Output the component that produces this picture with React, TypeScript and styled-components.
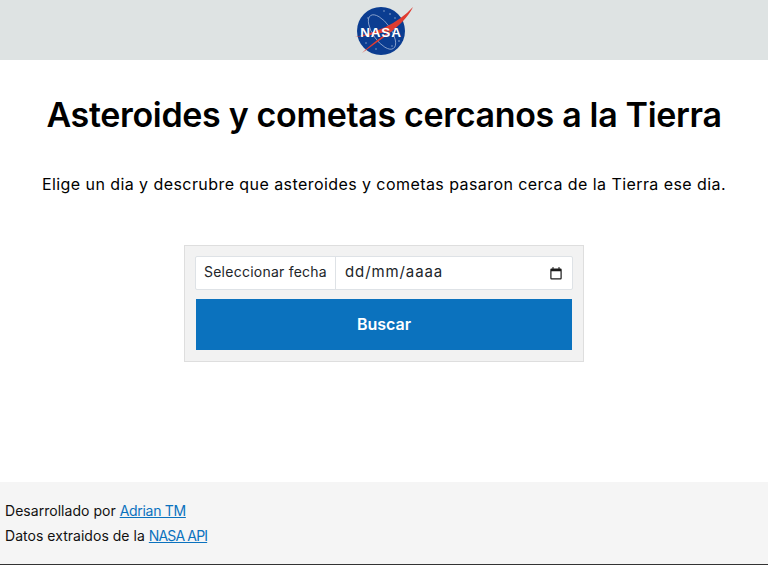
import React from "react";
import styled, { createGlobalStyle } from "styled-components";

const Global = createGlobalStyle`
  html, body { margin: 0; padding: 0; background: #fff; }
  body { font-family: "Inter", "Liberation Sans", sans-serif; color: #000; height: 565px; overflow: hidden; }
  #root { height: 565px; }
`;

const Page = styled.div`
  display: flex;
  flex-direction: column;
  height: 565px;
`;

const Header = styled.header`
  height: 60px;
  background: #dee3e3;
  display: flex;
  justify-content: center;
  align-items: center;
`;

const Main = styled.main`
  flex: 1;
  display: flex;
  flex-direction: column;
  align-items: center;
`;

const Title = styled.h1`
  margin: 33px 0 0;
  font-size: 34px;
  line-height: 44px;
  font-weight: 560;
  letter-spacing: -0.33px;
  white-space: nowrap;
`;

const Lead = styled.p`
  margin: 35px 0 0;
  font-size: 16px;
  line-height: 24px;
  letter-spacing: 0.43px;
  white-space: nowrap;
`;

const Card = styled.form`
  margin-top: 49px;
  width: 400px;
  height: 117px;
  box-sizing: border-box;
  background: #f2f2f2;
  border: 1px solid #dedede;
  padding: 10px;
  display: flex;
  flex-direction: column;
  gap: 9px;
`;

const InputGroup = styled.div`
  display: flex;
  height: 34px;
  box-sizing: border-box;
  background: #fff;
  border: 1px solid #dee2e6;
  border-radius: 2px;
`;

const Label = styled.span`
  width: 140px;
  flex: none;
  box-sizing: border-box;
  border-right: 1px solid #dee2e6;
  padding-bottom: 3px;
  display: flex;
  align-items: center;
  justify-content: center;
  font-size: 14px;
  letter-spacing: 0.24px;
  color: #212529;
`;

const DateField = styled.div`
  flex: 1;
  display: flex;
  align-items: center;
  justify-content: space-between;
  padding: 0 10px 3px 9px;
  font-size: 15px;
  color: #212529;
  letter-spacing: 0.9px;
`;

const DateIcon = styled.span`
  display: flex;
  padding-top: 3px;
`;

const SubmitButton = styled.button`
  height: 51px;
  margin: 0 1px;
  padding: 0 0 2px;
  border: 0;
  background: #0b72be;
  color: #fff;
  font-family: inherit;
  font-size: 16px;
  font-weight: 600;
`;

const Footer = styled.footer`
  height: 83px;
  box-sizing: border-box;
  background: #f5f5f5;
  border-bottom: 1px solid #333;
  padding: 16px 5px 0;
  font-size: 14px;
  line-height: 25px;
  letter-spacing: 0.03px;
  color: #111;
`;

const FooterLine = styled.div``;

const FooterLink = styled.a<{ $tracking: number }>`
  color: #0b72be;
  text-decoration: underline;
  letter-spacing: ${(p) => p.$tracking}px;
`;

const NasaLogo = () => (
  <svg width="60" height="56" viewBox="0 0 60 56" aria-hidden="true">
    <circle cx="27" cy="29" r="24" fill="#0b3d91" />
    <ellipse cx="28" cy="30" rx="9" ry="20" transform="rotate(-35 28 30)" fill="none" stroke="#a9bcdc" strokeWidth="0.7" />
    <g fill="#9fb4d8">
      <circle cx="36" cy="12" r="0.8" /><circle cx="41" cy="16" r="0.7" /><circle cx="45" cy="39" r="0.8" />
      <circle cx="38" cy="44" r="0.7" /><circle cx="14" cy="16" r="0.7" /><circle cx="12" cy="41" r="0.7" />
      <circle cx="30" cy="9" r="0.7" /><circle cx="22" cy="47" r="0.7" />
    </g>
    <path d="M1 35 C 20 31, 44 22, 59 5 C 52 20, 34 33, 8 51 C 18 41, 28 35, 36 29 C 24 32, 12 34, 1 35 Z" fill="#e03c31" />
    <text x="27" y="34.5" textAnchor="middle" fontFamily="Liberation Sans, sans-serif" fontWeight="700" fontSize="13.5" letterSpacing="0.8" fill="#fff">NASA</text>
  </svg>
);

const CalendarIcon = () => (
  <svg width="12" height="13" viewBox="0 0 12 13" aria-hidden="true">
    <path d="M2.5 0v1.5H1.5A1.2 1.2 0 0 0 .3 2.7v8.6a1.2 1.2 0 0 0 1.2 1.2h9a1.2 1.2 0 0 0 1.2-1.2V2.7a1.2 1.2 0 0 0-1.2-1.2h-1V0H8.5v1.5h-5V0z M1.5 4.2h9v7.1h-9z" fill="#1a1a1a" fillRule="evenodd" />
  </svg>
);

export default function App() {
  return (
    <Page>
      <Global />
      <Header><NasaLogo /></Header>
      <Main>
        <Title>Asteroides y cometas cercanos a la Tierra</Title>
        <Lead>Elige un dia y descrubre que asteroides y cometas pasaron cerca de la Tierra ese dia.</Lead>
        <Card onSubmit={(e) => e.preventDefault()}>
          <InputGroup>
            <Label>Seleccionar fecha</Label>
            <DateField><span>dd/mm/aaaa</span><DateIcon><CalendarIcon /></DateIcon></DateField>
          </InputGroup>
          <SubmitButton type="submit">Buscar</SubmitButton>
        </Card>
      </Main>
      <Footer>
        <FooterLine>Desarrollado por <FooterLink href="#" $tracking={-0.3}>Adrian TM</FooterLink></FooterLine>
        <FooterLine>Datos extraidos de la <FooterLink href="#" $tracking={-0.85}>NASA API</FooterLink></FooterLine>
      </Footer>
    </Page>
  );
}
